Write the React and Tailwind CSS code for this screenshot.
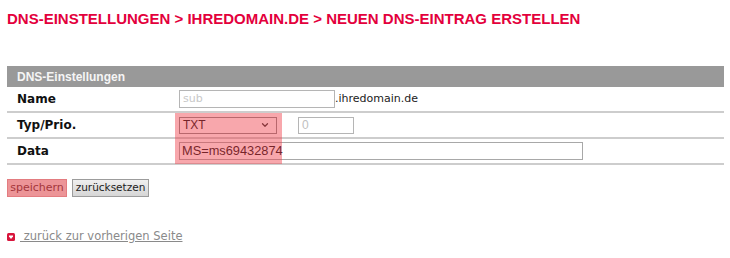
import { ChevronDown } from "lucide-react";

const verdana = "font-['DejaVu_Sans',Verdana,sans-serif]";
const arial = "font-['Liberation_Sans',Arial,sans-serif]";

function Row({ label, children }) {
  return (
    <div className="flex items-center h-[26px] border-b-2 border-[#cdcdcd]">
      <div className={`w-[172px] pl-[10px] text-[12px] font-bold text-[#111] ${verdana}`}>
        {label}
      </div>
      <div className="flex items-center">{children}</div>
    </div>
  );
}

export default function App() {
  return (
    <div className="relative w-[730px] h-[258px] bg-white overflow-hidden">
      {/* Breadcrumb title */}
      <div
        className={`pl-[7px] pt-[10px] leading-[18px] text-[15px] font-bold text-[#e3003c] ${arial}`}
      >
        DNS-EINSTELLUNGEN &gt; IHREDOMAIN.DE &gt; NEUEN DNS-EINTRAG ERSTELLEN
      </div>

      {/* Settings table */}
      <div className="ml-[7px] mt-[38px] w-[717px]">
        <div
          className={`h-[21px] bg-[#999999] pl-[10px] flex items-center text-[12px] font-bold text-[#f5f5f5] ${arial}`}
        >
          DNS-Einstellungen
        </div>

        <Row label="Name">
          <div
            className={`w-[156px] h-[18px] border border-[#b5b5b5] pl-[3px] flex items-center text-[11px] text-[#c8c8c8] ${verdana}`}
          >
            sub
          </div>
          <span className={`text-[11px] text-[#222] ${verdana}`}>.ihredomain.de</span>
        </Row>

        <Row label="Typ/Prio.">
          <div
            className={`w-[98px] h-[17px] border border-[#8a8a8a] pl-[3px] pr-[6px] flex items-center justify-between text-[12px] text-[#111] ${arial}`}
          >
            <span>TXT</span>
            <ChevronDown size={10} strokeWidth={3} className="text-[#333]" />
          </div>
          <div
            className={`ml-[21px] w-[56px] h-[17px] border border-[#b5b5b5] pl-[3px] flex items-center text-[12px] text-[#c0c0c0] ${arial}`}
          >
            0
          </div>
        </Row>

        <Row label="Data">
          <div
            className={`w-[404px] h-[18px] border border-[#a8a8a8] pl-[2px] flex items-center text-[12.8px] text-[#111] ${arial}`}
          >
            MS=ms69432874
          </div>
        </Row>
      </div>

      {/* Buttons */}
      <div className="ml-[7px] mt-[14px] flex gap-[5px]">
        <button
          className={`h-[18px] w-[60px] border border-[#e37c80] bg-[#ec9497] text-[11px] text-[#a4363b] ${verdana}`}
        >
          speichern
        </button>
        <button
          className={`h-[18px] w-[77px] border border-[#9c9c9c] bg-gradient-to-b from-[#efefef] to-[#d6d6d6] text-[10.5px] text-[#222] ${verdana}`}
        >
          zurücksetzen
        </button>
      </div>

      {/* Back link */}
      <div className="ml-[7px] mt-[31px] flex items-center">
        <svg width="8" height="8" viewBox="0 0 8 8">
          <rect width="8" height="8" rx="1.5" fill="#d8153c" />
          <path d="M2 2.5 H6 L6 3.5 L4 6 L2 3.5 Z" fill="#fff" />
        </svg>
        <a
          href="#"
          className={`ml-[5px] text-[11.5px] text-[#8a8a8a] underline whitespace-pre ${verdana}`}
        >
          {" zurück zur vorherigen Seite"}
        </a>
      </div>

      {/* Highlight annotation */}
      <div className="absolute left-[175px] top-[113px] w-[107px] h-[51px] bg-[rgba(240,60,70,0.45)] pointer-events-none" />
    </div>
  );
}
